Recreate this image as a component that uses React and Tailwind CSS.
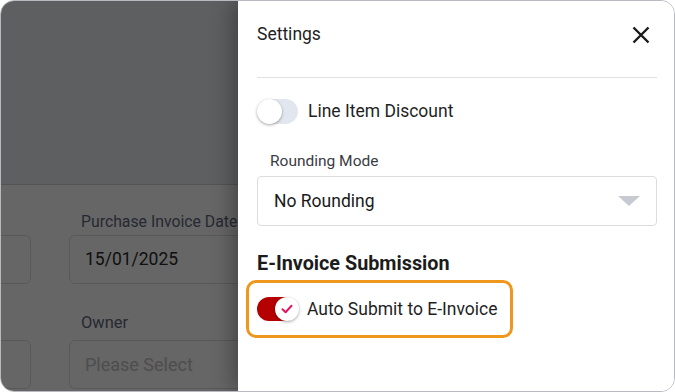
import React from "react";

const Switch = ({ on }) => {
  return on ? (
    <div className="relative w-[42px] h-[24px] shrink-0">
      <div className="w-[40px] h-[24px] rounded-full bg-[#b50000]" />
      <div className="absolute right-0 top-0 w-[24px] h-[24px] rounded-full bg-white shadow-[0_1px_3px_rgba(0,0,0,0.35)] flex items-center justify-center">
        <svg width="12" height="10" viewBox="0 0 12 10" fill="none">
          <path
            d="M1.5 5.2 4.6 8.2 10.5 1.8"
            stroke="#e0195c"
            strokeWidth="2"
            strokeLinecap="round"
            strokeLinejoin="round"
          />
        </svg>
      </div>
    </div>
  ) : (
    <div className="relative w-[41px] h-[25px] shrink-0">
      <div className="w-[41px] h-[25px] rounded-full bg-[#e2e6ef]" />
      <div className="absolute left-0 top-0 w-[25px] h-[25px] rounded-full bg-white shadow-[0_1px_3px_rgba(0,0,0,0.35)]" />
    </div>
  );
};

const App = () => {
  return (
    <div
      className="w-[675px] h-[392px] bg-white"
      style={{ fontFamily: "Roboto, 'Liberation Sans', sans-serif" }}
    >
      <div className="w-[675px] h-[392px] rounded-[14px] border border-[#b8bac1] overflow-hidden flex">
        {/* Page underneath, dimmed */}
        <div className="relative w-[237px] h-full overflow-hidden bg-white shrink-0">
          <div className="h-[184px] bg-[#eceef3] border-b border-[#cfd1d6]" />
          <div className="flex ml-[-170px] mt-[24px] gap-[38px]">
            <div className="w-[200px] shrink-0">
              <div className="h-[26px]" />
              <div className="h-[49px] rounded-[6px] border border-[#dedede]" />
              <div className="h-[56px]" />
              <div className="relative h-[49px] rounded-[6px] border border-[#dedede]">
                <div className="absolute right-[157px] top-[16px] w-0 h-0 border-l-[10px] border-r-[10px] border-t-[10px] border-l-transparent border-r-transparent border-t-[#7a7a7a]" />
              </div>
            </div>
            <div className="w-[240px] shrink-0">
              <div className="h-[26px] pl-[12px] text-[15.8px] leading-[26px] text-[#5f6880] whitespace-nowrap">
                Purchase Invoice Date
              </div>
              <div className="h-[49px] rounded-[6px] border border-[#dedede] flex items-center pl-[15px] text-[17.5px] text-[#2a2a2a]">
                15/01/2025
              </div>
              <div className="h-[56px] flex items-end pb-[4px] pl-[12px] text-[16.5px] text-[#5f6880]">
                Owner
              </div>
              <div className="h-[49px] rounded-[6px] border border-[#dedede] flex items-center pl-[15px] text-[18px] text-[#c2c2c2]">
                Please Select
              </div>
            </div>
          </div>
          <div className="absolute inset-0 bg-black/60" />
        </div>

        {/* Settings drawer */}
        <div className="relative flex-1 h-full bg-white pl-[19px] pr-[17px] text-[#1f1f1f] shadow-[-6px_0_20px_rgba(0,0,0,0.3)]">
          <div className="h-[67px] flex items-center justify-between">
            <span className="text-[17.5px]">Settings</span>
            <svg width="18" height="18" viewBox="0 0 18 18" className="mr-[7px]">
              <path
                d="M1.5 1.5 16.5 16.5M16.5 1.5 1.5 16.5"
                stroke="#1a1a1a"
                strokeWidth="2.4"
              />
            </svg>
          </div>
          <div className="mt-[9px] border-t border-[#e1e1e4]" />

          <div className="mt-[20px] flex items-center gap-[10px]">
            <Switch on={false} />
            <span className="text-[17.5px]">Line Item Discount</span>
          </div>

          <div className="mt-[27px] pl-[13px] text-[15.5px] leading-[20px] text-[#3c3c44]">
            Rounding Mode
          </div>
          <div className="mt-[5px] h-[50px] rounded-[4px] border border-[#dcdcdf] flex items-center justify-between pl-[16px] pr-[16px]">
            <span className="text-[17.5px] text-[#1a1a1a]">No Rounding</span>
            <div className="w-0 h-0 border-l-[11px] border-r-[11px] border-t-[10px] border-l-transparent border-r-transparent border-t-[#c7cad0]" />
          </div>

          <div className="mt-[26px] text-[19.8px] leading-[24px] font-bold text-[#1c1c1c]">
            E-Invoice Submission
          </div>
          <div className="mt-[4px] ml-[-11px] w-[267px] h-[58px] rounded-[10px] border-[3px] border-[#ef961c] flex items-center gap-[8px] pl-[8px]">
            <Switch on={true} />
            <span className="text-[17.5px]">Auto Submit to E-Invoice</span>
          </div>
        </div>
      </div>
    </div>
  );
};

export default App;
